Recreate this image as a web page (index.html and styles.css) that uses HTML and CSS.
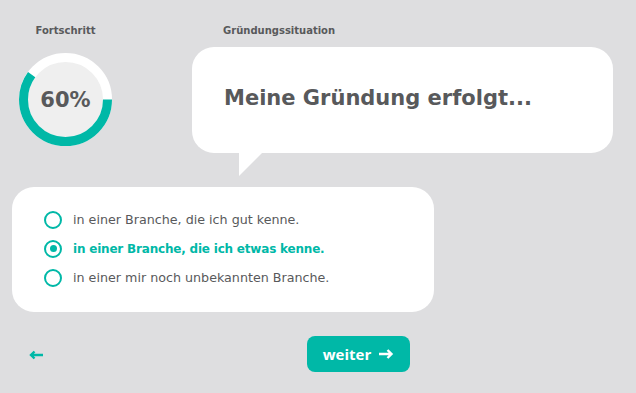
FILE: index.html
```html
<!DOCTYPE html>
<html lang="de">
<head>
  <meta charset="UTF-8">
  <title>Gründungssituation</title>
  <link rel="stylesheet" href="styles.css">
</head>
<body>
  <div class="top">
    <!-- Fortschritt -->
    <div class="progress">
      <div class="label">Fortschritt</div>
      <div class="ring">
        <svg width="93" height="93" viewBox="0 0 93 93">
          <circle cx="46.5" cy="46.5" r="42" fill="#efefef" stroke="#fff" stroke-width="9"/>
          <circle cx="46.5" cy="46.5" r="42" fill="none" stroke="#00b8a7" stroke-width="9"
                  stroke-dasharray="158.3 300"/>
        </svg>
        <div class="percent">60%</div>
      </div>
    </div>

    <!-- Frage -->
    <div class="situation">
      <div class="label">Gründungssituation</div>
      <div class="bubble">
        <h1>Meine Gründung erfolgt...</h1>
      </div>
    </div>
  </div>

  <div class="options">
    <label class="option"><span class="radio"></span>in einer Branche, die ich gut kenne.</label>
    <label class="option selected"><span class="radio"></span>in einer Branche, die ich etwas kenne.</label>
    <label class="option"><span class="radio"></span>in einer mir noch unbekannten Branche.</label>
  </div>

  <div class="footer">
    <a class="back" href="#">
      <svg width="16" height="10" viewBox="0 0 16 10"><path d="M15 5H3M6.5 1.5L3 5l3.5 3.5" fill="none" stroke="#00b8a7" stroke-width="2.4"/></svg>
    </a>
    <a class="next" href="#">weiter
      <svg width="16" height="12" viewBox="0 0 16 12"><path d="M1 6h12M9.5 2L13.5 6l-4 4" fill="none" stroke="#fff" stroke-width="2.4"/></svg>
    </a>
  </div>
</body>
</html>
```

FILE: styles.css
```css
/* Reset */
* {
  margin: 0;
  padding: 0;
  box-sizing: border-box;
}

body {
  width: 636px;
  height: 393px;
  overflow: hidden;
  background-color: #dedee0;
  font-family: "DejaVu Sans", "Open Sans", sans-serif;
  color: #58595b;
}

.label {
  font-size: 10px;
  font-weight: bold;
  line-height: 14px;
  color: #58595b;
}

/* Top row */
.top {
  display: flex;
  padding: 24px 0 0 19px;
}

.progress {
  width: 93px;
  display: flex;
  flex-direction: column;
  align-items: center;
}

.ring {
  display: grid;
  margin-top: 15px;
}

.ring svg {
  grid-area: 1 / 1;
}

.ring .percent {
  grid-area: 1 / 1;
  align-self: center;
  justify-self: center;
  font-size: 21px;
  font-weight: bold;
  color: #58595b;
}

.situation {
  margin-left: 80px;
  width: 421px;
}

.situation .label {
  padding-left: 31px;
}

.bubble {
  position: relative;
  margin-top: 9px;
  height: 106px;
  background-color: #fff;
  border-radius: 22px;
  display: flex;
  align-items: center;
  padding-left: 32px;
}

.bubble::after {
  content: "";
  position: absolute;
  left: 47px;
  top: 100%;
  width: 0;
  height: 0;
  border-top: 23px solid #fff;
  border-right: 23px solid transparent;
}

.bubble h1 {
  font-size: 21px;
  font-weight: bold;
  color: #58595b;
  margin-top: -4px;
}

/* Options */
.options {
  margin: 34px 0 0 12px;
  width: 422px;
  height: 125px;
  background-color: #fff;
  border-radius: 22px;
  padding: 18px 0 0 32px;
}

.option {
  display: flex;
  align-items: center;
  height: 29px;
  font-size: 12.7px;
  color: #58595b;
}

.option .radio {
  flex-shrink: 0;
  width: 18px;
  height: 18px;
  border: 2.5px solid #00b8a7;
  border-radius: 50%;
  margin-right: 11px;
  display: flex;
  align-items: center;
  justify-content: center;
}

.option.selected {
  color: #00b8a7;
  font-size: 12px;
  font-weight: bold;
  letter-spacing: -0.2px;
}

.option.selected .radio::after {
  content: "";
  width: 7px;
  height: 7px;
  border-radius: 50%;
  background-color: #00b8a7;
}

/* Footer */
.footer {
  display: flex;
  align-items: center;
  margin-top: 24px;
  padding-left: 28px;
}

.back {
  display: flex;
  margin-top: 2px;
}

.next {
  margin-left: 263px;
  width: 103px;
  height: 36px;
  border-radius: 8px;
  background-color: #00b8a7;
  color: #fff;
  text-decoration: none;
  font-family: "Open Sans", sans-serif;
  font-weight: bold;
  font-size: 15px;
  display: flex;
  align-items: center;
  justify-content: center;
  gap: 7px;
}
```
